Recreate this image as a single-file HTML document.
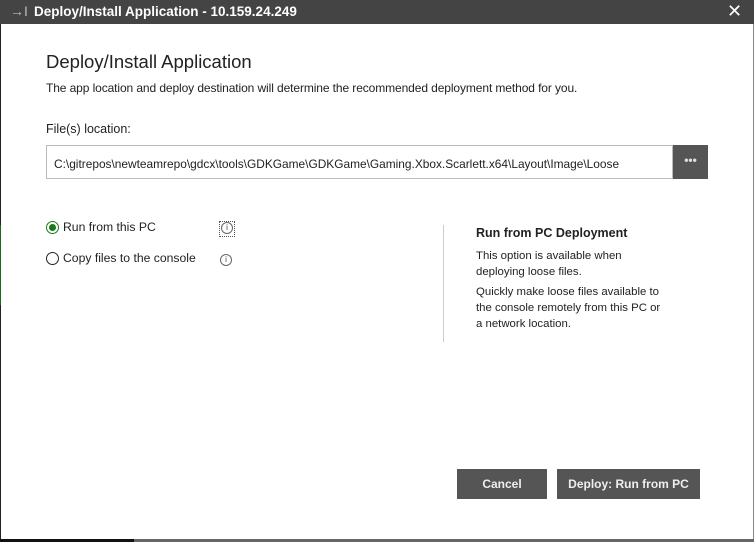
<!DOCTYPE html>
<html><head><style>
body{margin:0;width:754px;height:542px;overflow:hidden;background:#fff;font-family:"Liberation Sans",sans-serif;position:relative}
.t{position:absolute;white-space:nowrap}
</style></head><body>
<div style="position:absolute;left:0;top:0;width:754px;height:24px;background:#444"></div>
<div class="t" style="left:10px;top:3px;color:#bbb;font-size:14px">→I</div>
<div class="t" style="left:34px;top:4px;color:#fff;font-size:13.5px;font-weight:bold">Deploy/Install Application - 10.159.24.249</div>
<div class="t" style="left:727px;top:1px;color:#fff;font-size:18px">✕</div>
<div style="position:absolute;left:0;top:24px;width:1px;height:518px;background:#222"></div>
<div style="position:absolute;left:0;top:225px;width:1px;height:80px;background:#1a6b1a"></div>
<div style="position:absolute;right:0;top:24px;width:1px;height:518px;background:#888"></div>
<div style="position:absolute;left:0;top:539px;width:134px;height:3px;background:#111"></div>
<div style="position:absolute;left:134px;top:539px;width:620px;height:3px;background:#666"></div>
<div class="t" style="left:46px;top:51px;font-size:18.5px;color:#222">Deploy/Install Application</div>
<div class="t" style="left:46px;top:81px;font-size:12px;color:#222;letter-spacing:-0.1px">The app location and deploy destination will determine the recommended deployment method for you.</div>
<div class="t" style="left:46px;top:122px;font-size:12.5px;color:#222">File(s) location:</div>
<div style="position:absolute;left:46px;top:145px;width:625px;height:32px;border:1px solid #bbb"></div>
<div class="t" style="left:54px;top:157px;font-size:11.9px;color:#222">C:\gitrepos\newteamrepo\gdcx\tools\GDKGame\GDKGame\Gaming.Xbox.Scarlett.x64\Layout\Image\Loose</div>
<div style="position:absolute;left:673px;top:145px;width:35px;height:34px;background:#555;color:#ddd;font-size:12px;text-align:center;line-height:30px;font-weight:bold">•••</div>
<div style="position:absolute;left:46px;top:221px;width:11px;height:11px;border:1px solid #1a7a1a;border-radius:50%"></div>
<div style="position:absolute;left:49px;top:224px;width:7px;height:7px;background:#1a7a1a;border-radius:50%"></div>
<div class="t" style="left:63px;top:220px;font-size:12.2px;color:#222">Run from this PC</div>
<div style="position:absolute;left:46px;top:252px;width:11px;height:11px;border:1px solid #222;border-radius:50%"></div>
<div class="t" style="left:63px;top:251px;font-size:12.2px;color:#222">Copy files to the console</div>
<div style="position:absolute;left:219px;top:221px;width:14px;height:14px;border:1px dotted #555"></div>
<div class="t" style="left:221px;top:222px;width:10px;height:10px;border:1px solid #666;border-radius:50%;font-size:8px;text-align:center;line-height:10px;color:#444">i</div>
<div class="t" style="left:220px;top:254px;width:10px;height:10px;border:1px solid #666;border-radius:50%;font-size:8px;text-align:center;line-height:10px;color:#444">i</div>
<div style="position:absolute;left:443px;top:225px;width:1px;height:117px;background:#ccc"></div>
<div class="t" style="left:476px;top:226px;font-size:12.5px;font-weight:bold;color:#222">Run from PC Deployment</div>
<div class="t" style="left:476px;top:248px;font-size:11.4px;line-height:16px;color:#222">This option is available when<br>deploying loose files.</div>
<div class="t" style="left:476px;top:284px;font-size:11.4px;line-height:16px;color:#222">Quickly make loose files available to<br>the console remotely from this PC or<br>a network location.</div>
<div style="position:absolute;left:457px;top:469px;width:90px;height:30px;background:#555;color:#eee;font-size:12px;text-align:center;line-height:30px;font-weight:bold">Cancel</div>
<div style="position:absolute;left:557px;top:469px;width:143px;height:30px;background:#555;color:#eee;font-size:12px;text-align:center;line-height:30px;font-weight:bold">Deploy: Run from PC</div>
</body></html>
